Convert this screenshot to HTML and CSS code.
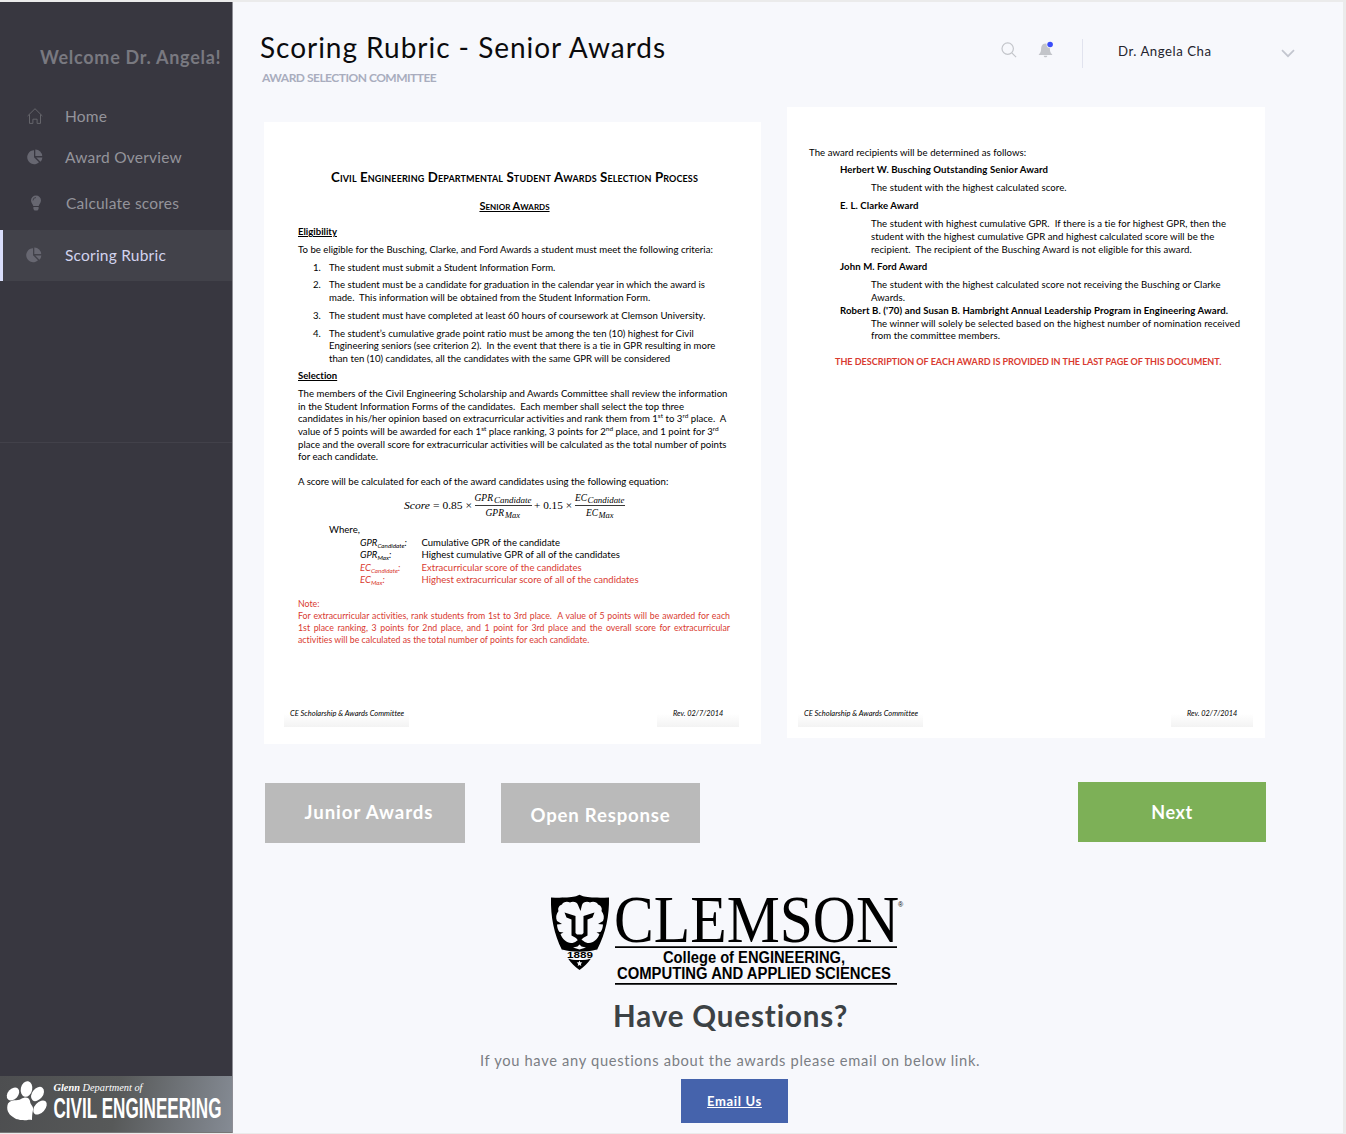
FILE: index.html
```html
<!DOCTYPE html>
<html lang="en">
<head>
<meta charset="utf-8">
<title>Scoring Rubric - Senior Awards</title>
<link rel="stylesheet" href="styles.css">
</head>
<body>
<div class="app">
  <aside class="sidebar">
    <div class="welcome">Welcome Dr. Angela!</div>
    <nav class="nav">
      <a class="nav-item home"><svg class="ico" viewBox="0 0 16 16"><path d="M.6 8 8 .7 15.400 8M2.500 6.500v8.900h3.400v-4.200h4.200v4.200h3.400V6.500" fill="none" stroke="#65656b" stroke-width="1"/></svg><span class="label">Home</span></a>
      <a class="nav-item overview"><svg class="ico" viewBox="0 0 16 16"><path d="M7 1.200v7.100l5 5A7 7 0 1 1 7 1.200Z"/><path d="M8.300.6a6.600 6.600 0 0 1 6.900 6.500H8.300Z"/><path d="M9.200 8.400h6.200a6.800 6.800 0 0 1-2 4.400Z"/></svg><span class="label">Award Overview</span></a>
      <a class="nav-item calc"><svg class="ico" viewBox="0 0 16 16"><path d="M8 .5a5 5 0 0 1 5 5c0 2.400-1.900 3.500-2.300 5.500H5.300C4.900 9 3 7.900 3 5.500a5 5 0 0 1 5-5ZM5.400 11.900h5.200v2L9.500 15.500h-3l-1.100-1.600Z"/><path d="M5 5.500a3 3 0 0 1 3-3" fill="none" stroke="#383740" stroke-width=".8"/></svg><span class="label">Calculate scores</span></a>
      <a class="nav-item active"><svg class="ico" viewBox="0 0 16 16"><path d="M7 1.200v7.100l5 5A7 7 0 1 1 7 1.200Z"/><path d="M8.300.6a6.600 6.600 0 0 1 6.900 6.500H8.300Z"/><path d="M9.200 8.400h6.200a6.800 6.800 0 0 1-2 4.400Z"/></svg><span class="label">Scoring Rubric</span></a>
    </nav>
    <div class="dept">
      <svg viewBox="0 0 231 57" width="231" height="57">
        <g fill="#fff">
          <ellipse cx="13" cy="18" rx="5.200" ry="7.300" transform="rotate(42 13 18)"/>
          <ellipse cx="26.500" cy="13" rx="5.700" ry="7.900" transform="rotate(12 26.500 13)"/>
          <ellipse cx="37.500" cy="18" rx="5.400" ry="8" transform="rotate(38 37.500 18)"/>
          <ellipse cx="40" cy="31.500" rx="5.200" ry="8.300" transform="rotate(42 40 31.500)"/>
          <path d="M8 27.500c4-5 9-2 13-4.500s8-2 9 2c0 4 4 5 3 9s-1 8-1 10c-4-1-5 1-9 0-4 0-6 0-10-3-5-3-7-8-5-13.500Z"/>
        </g>
        <text x="53.500" y="14.500" class="dept-small" textLength="89" lengthAdjust="spacingAndGlyphs"><tspan font-weight="700">Glenn</tspan> Department of</text>
        <text x="53.500" y="41.500" class="dept-big" textLength="168" lengthAdjust="spacingAndGlyphs">CIVIL ENGINEERING</text>
      </svg>
    </div>
  </aside>

  <main class="main">
    <header class="header">
      <div class="titles">
        <h1>Scoring Rubric - Senior Awards</h1>
        <div class="subtitle">AWARD SELECTION COMMITTEE</div>
      </div>
      <div class="tools">
        <svg class="search" viewBox="0 0 16 16"><circle cx="6.700" cy="6.600" r="5.700"/><path d="m10.800 10.800 4.300 4.300"/></svg>
        <svg class="bell" viewBox="0 0 16 18"><path d="M7.500 2.500c3.200.3 4.200 2.600 4.400 5.500.1 2.400.5 4 2.300 5.400v.6H.8v-.6C2.600 12 3 10.400 3.100 8c.2-2.900 1.200-5.200 4.400-5.500ZM5.700 14.700h3.600c-.3 2-3.300 2-3.600 0Z" fill="#c3c5ca"/><circle cx="12.100" cy="3.500" r="3.500" fill="#f7f8fc"/><circle cx="12.100" cy="3.500" r="2.800" fill="#3a4dfa"/></svg>
        <span class="divider"></span>
        <span class="user">Dr. Angela Cha</span>
        <svg class="chev" viewBox="0 0 14 9"><path d="m1 1.200 6 6 6-6"/></svg>
      </div>
    </header>

    <section class="docs">
      <article class="doc first">
        <h2>Civil Engineering Departmental Student Awards Selection Process</h2>
        <h3>Senior Awards</h3>
        <h4>Eligibility</h4>
        <p>To be eligible for the Busching, Clarke, and Ford Awards a student must meet the following criteria:</p>
        <ol>
          <li>The student must submit a Student Information Form.</li>
          <li>The student must be a candidate for graduation in the calendar year in which the award is<br>made.&nbsp; This information will be obtained from the Student Information Form.</li>
          <li>The student must have completed at least 60 hours of coursework at Clemson University.</li>
          <li>The student’s cumulative grade point ratio must be among the ten (10) highest for Civil<br>Engineering seniors (see criterion 2).&nbsp; In the event that there is a tie in GPR resulting in more<br>than ten (10) candidates, all the candidates with the same GPR will be considered</li>
        </ol>
        <h4>Selection</h4>
        <p class="body">The members of the Civil Engineering Scholarship and Awards Committee shall review the information<br>in the Student Information Forms of the candidates.&nbsp; Each member shall select the top three<br>candidates in his/her opinion based on extracurricular activities and rank them from 1<sup>st</sup> to 3<sup>rd</sup> place.&nbsp; A<br>value of 5 points will be awarded for each 1<sup>st</sup> place ranking, 3 points for 2<sup>nd</sup> place, and 1 point for 3<sup>rd</sup><br>place and the overall score for extracurricular activities will be calculated as the total number of points<br>for each candidate.</p>
        <p class="score">A score will be calculated for each of the award candidates using the following equation:</p>
        <svg class="equation" viewBox="0 0 224 32" width="224" height="32">
          <text x="1" y="16" textLength="26" lengthAdjust="spacingAndGlyphs" font-style="italic">Score</text>
          <text x="30" y="16" textLength="39" lengthAdjust="spacingAndGlyphs">= 0.85 ×</text>
          <text x="71.500" y="8" textLength="18.500" lengthAdjust="spacingAndGlyphs" font-style="italic">GPR</text>
          <text x="91" y="10" textLength="37.500" lengthAdjust="spacingAndGlyphs" class="sub">Candidate</text>
          <path d="M72 12.500h57M172 12.500h50" stroke="#222" stroke-width=".9"/>
          <text x="82.500" y="22.500" textLength="18.500" lengthAdjust="spacingAndGlyphs" font-style="italic">GPR</text>
          <text x="102" y="24.500" textLength="15" lengthAdjust="spacingAndGlyphs" class="sub">Max</text>
          <text x="131" y="16" textLength="38" lengthAdjust="spacingAndGlyphs">+ 0.15 ×</text>
          <text x="172" y="8" textLength="12" lengthAdjust="spacingAndGlyphs" font-style="italic">EC</text>
          <text x="184.500" y="10" textLength="37" lengthAdjust="spacingAndGlyphs" class="sub">Candidate</text>
          <text x="183" y="22.500" textLength="12" lengthAdjust="spacingAndGlyphs" font-style="italic">EC</text>
          <text x="195.500" y="24.500" textLength="15" lengthAdjust="spacingAndGlyphs" class="sub">Max</text>
        </svg>
        <div class="where">Where,</div>
        <dl>
          <dt>GPR<sub>Candidate</sub>:</dt><dd>Cumulative GPR of the candidate</dd>
          <dt>GPR<sub>Max</sub>:</dt><dd>Highest cumulative GPR of all of the candidates</dd>
          <dt class="red">EC<sub>Candidate</sub>:</dt><dd class="red">Extracurricular score of the candidates</dd>
          <dt class="red">EC<sub>Max</sub>:</dt><dd class="red">Highest extracurricular score of all of the candidates</dd>
        </dl>
        <div class="note red">
          <div>Note:</div>
          <div class="just">For extracurricular activities, rank students from 1st to 3rd place.&nbsp; A value of 5 points will be awarded for each</div>
          <div class="just">1st place ranking, 3 points for 2nd place, and 1 point for 3rd place and the overall score for extracurricular</div>
          <div>activities will be calculated as the total number of points for each candidate.</div>
        </div>
        <footer class="doc-foot"><span class="committee">CE Scholarship &amp; Awards Committee</span><span class="rev">Rev. 02/7/2014</span></footer>
      </article>

      <article class="doc second">
        <p>The award recipients will be determined as follows:</p>
        <h5>Herbert W. Busching Outstanding Senior Award</h5>
        <p class="in">The student with the highest calculated score.</p>
        <h5>E. L. Clarke Award</h5>
        <p class="in">The student with highest cumulative GPR.&nbsp; If there is a tie for highest GPR, then the<br>student with the highest cumulative GPR and highest calculated score will be the<br>recipient.&nbsp; The recipient of the Busching Award is not eligible for this award.</p>
        <h5>John M. Ford Award</h5>
        <p class="in tight">The student with the highest calculated score not receiving the Busching or Clarke<br>Awards.</p>
        <h5 class="tight hambright">Robert B. ('70) and Susan B. Hambright Annual Leadership Program in Engineering Award.</h5>
        <p class="in">The winner will solely be selected based on the highest number of nomination received<br>from the committee members.</p>
        <div class="desc red">THE DESCRIPTION OF EACH AWARD IS PROVIDED IN THE LAST PAGE OF THIS DOCUMENT.</div>
        <footer class="doc-foot"><span class="committee">CE Scholarship &amp; Awards Committee</span><span class="rev">Rev. 02/7/2014</span></footer>
      </article>
    </section>

    <section class="actions">
      <button class="btn junior">Junior Awards</button>
      <button class="btn open">Open Response</button>
      <button class="btn next">Next</button>
    </section>

    <section class="contact">
      <svg class="clemson" viewBox="550 893 356 94" width="356" height="94">
        <path d="M551 897.500c11 .5 21 0 25-1.200l3.500-1.600 3.500 1.600c4 1.200 14 1.700 26 1.200.4 18-3 35-12 52.500-11 4-24 4-35 0-8-16-11.500-33-11-52.500Z"/>
        <path d="M568 958.500c7 2 16 2 23 0-3 4.500-7 8.500-11.500 11.500-4.500-3-8.500-7-11.500-11.500Z"/>
        <g fill="#f7f8fc">
          <path d="M578 905c-1-3-5-4-8-2.500-3-1.500-7-.5-8 2-3 1-4.500 4-3.500 6.500-2.500 3-3 7-1.500 10l5 3-5 .500c.2 3 1 5.500 2.500 7.500l4 .5-3 1.500c1 3 2.500 5 4.500 6.500 3 3 8 3.500 11.500.5 1.500-1 2.500-1.500 3.500-1.500s2 .5 3.500 1.500c3.500 3 8.500 2.500 11.500-.5 2-1.500 3.500-3.500 4.500-6.500l-3-1.500 4-.5c1.500-2 2.300-4.500 2.500-7.500l-5-.5 5-3c1.500-3 1-7-1.500-10 1-2.500-.5-5.500-3.500-6.500-1-2.500-5-3.500-8-2-3-1.500-7-.5-8 2.500l-1.500 6Z"/>
          <path d="m573 947.500 4.500-1 2-2 2 2 4.500 1-6.500 2Z"/>
        </g>
        <path d="m564.500 912.500 11 3.500v17l1.500 1.500h5l1.500-1.500v-17l11-3.500-2 5-5 2v16l-4.500 2.500-2.500 3h-2l-2.500-3-4.500-2.500v-16l-5-2Z"/>
        <path fill="#f7f8fc" d="m579.500 960.500.8 1.800 2 .2-1.500 1.400.5 2-1.800-1-1.800 1 .5-2-1.500-1.400 2-.2Z"/>
        <path fill="#f7f8fc" d="M562 949.500c11 3 24 3 35 0l-2.500 8c-9 3-21 3-30 0Z"/>
        <text x="567" y="957.800" class="year" textLength="26" lengthAdjust="spacingAndGlyphs">1889</text>
        <text x="614" y="942" class="word" textLength="285" lengthAdjust="spacingAndGlyphs">CLEMSON</text>
        <text x="898" y="907" class="reg">®</text>
        <path d="M615 946.200h282v1.700H615ZM615 983h282v1.700H615Z"/>
        <text x="663" y="963" class="college" textLength="182" lengthAdjust="spacingAndGlyphs">College of ENGINEERING,</text>
        <text x="617" y="978.500" class="college" textLength="274" lengthAdjust="spacingAndGlyphs">COMPUTING AND APPLIED SCIENCES</text>
      </svg>
      <h2 class="questions">Have Questions?</h2>
      <p class="ask">If you have any questions about the awards please email on below link.</p>
      <a class="email">Email Us</a>
    </section>
  </main>
</div>
</body>
</html>
```
FILE: styles.css
```css
* { box-sizing: border-box; margin: 0; padding: 0; }
body { width: 1346px; height: 1134px; overflow: hidden; font-family: Lato, "Open Sans", sans-serif; background: #ebebeb; }
.app { display: flex; width: 1343px; height: 1131px; margin-top: 2px; background: #f7f8fc; }
svg { overflow: visible; flex: none; }

.sidebar { display: flex; flex-direction: column; width: 233px; flex: none; background: #383740; border-right: 1px solid #8e8e95; }
.welcome { padding: 42px 0 0 40px; height: 93px; font-size: 18px; line-height: 26px; font-weight: 700; letter-spacing: .72px; color: #797980; white-space: nowrap; }
.nav { display: flex; flex-direction: column; height: 348px; border-bottom: 1px solid #42414a; }
.nav-item { display: flex; align-items: center; gap: 22px; height: 41px; padding-left: 27px; font-size: 15.500px; letter-spacing: .22px; color: #94949b; }
.ico { width: 16px; height: 16px; fill: #676771; flex: none; }
.calc { height: 52px; padding-bottom: 3px; padding-left: 28px; }
.overview { height: 42px; }
.active { height: 51px; padding: 0 0 1px 23px; border-left: 3px solid #d9defb; background: #42424a; color: #d2d3ee; gap: 23px; }
.dept { margin-top: auto; height: 57px; border-bottom: 1px solid #777; background: linear-gradient(100deg, #4d4e50, #575959 50%, #858b94); }
.dept svg { display: block; }
.dept-small { font: italic 10.500px "Liberation Serif", serif; fill: #fff; }
.dept-big { font: 700 29px "Liberation Sans", sans-serif; fill: #fff; }

.main { flex: 1; display: flex; flex-direction: column; }
.header { display: flex; height: 105px; padding-left: 27px; }
.titles { width: 740px; padding-top: 26px; }
h1 { font-size: 28px; line-height: 38px; font-weight: 400; letter-spacing: .97px; color: #0b0b0d; white-space: nowrap; }
.subtitle { padding-left: 2px; margin-top: 3px; font-size: 12px; line-height: 18px; font-weight: 700; letter-spacing: -.5px; color: #a9adbe; white-space: nowrap; }
.tools { display: flex; align-items: center; height: 62px; margin-top: 17px; }
.search { width: 16px; height: 16px; margin: 0 21px 0 1px; fill: none; stroke: #c3c5ca; stroke-width: 1.200; }
.bell { width: 16px; height: 18px; }
.divider { width: 1px; height: 29px; margin: 6px 35px 0 28px; background: #e1e3ee; }
.user { width: 163px; padding-top: 1px; font-size: 13.200px; letter-spacing: .54px; color: #24242e; }
.chev { width: 14px; height: 9px; margin-top: 7px; fill: none; stroke: #c3c6cf; stroke-width: 1.700; }

.docs { display: flex; align-items: flex-start; gap: 26px; height: 637px; padding-left: 31px; }
.doc { display: flex; flex-direction: column; background: #fff; font-size: 9.600px; letter-spacing: .015px; line-height: 12.600px; color: #000; white-space: nowrap; font-variant-ligatures: none; }
.red { color: #d93a30; }
.first { width: 497px; height: 622px; margin-top: 15px; padding: 48px 30px 0 34px; }
.first h2 { font-size: 13.300px; line-height: 15px; letter-spacing: .12px; text-align: center; font-variant-caps: small-caps; }
.first h3 { margin-top: 14px; font-size: 11px; line-height: 14px; text-align: center; font-variant-caps: small-caps; text-decoration: underline; }
.first h4 { margin: 13px 0 5.200px; font-size: 9.500px; line-height: 12.600px; text-decoration: underline; }
.first ol { list-style: none; counter-reset: item; margin-top: 5.200px; }
.first li { position: relative; padding-left: 31px; margin-bottom: 5.200px; counter-increment: item; }
.first li::before { content: counter(item) "."; position: absolute; left: 15px; }
.first ol + h4 { margin-top: 0; }
sup, sub { font-size: 6.500px; line-height: 0; }
sub { font-size: 6.300px; vertical-align: -2px; }
.score { margin-top: 12.600px; }
.equation { margin: 4px 0 0 105px; font: 10.300px "Liberation Serif", serif; letter-spacing: 0; }
.sub { font-size: 7.800px; font-style: italic; }
.where { margin: -1px 0 0 31px; }
dl { display: grid; grid-template-columns: 61.500px 1fr; padding-left: 62px; font-size: 9.500px; }
dt { font-style: italic; }
.note { margin-top: 11.500px; width: 432px; line-height: 11.700px; font-size: 8.780px; }
.just { text-align: justify; text-align-last: justify; white-space: normal; }
.doc-foot { display: flex; justify-content: space-between; margin-top: auto; font-size: 7.500px; font-style: italic; line-height: 9px; }
.doc-foot span { height: 19px; padding: 1px 5px 0; background: linear-gradient(#fff 30%, #f3f3f3); }
.first .doc-foot { margin: auto -8px 17px -14px; }
.doc-foot .committee { width: 125px; padding-left: 6px; }
.doc-foot .rev { width: 82px; padding-left: 16px; font-size: 7.350px; }
.second { width: 478px; height: 631px; padding: 39.500px 12px 11px 22px; line-height: 12.720px; letter-spacing: .06px; }
.second p { margin-bottom: 5.200px; }
.second h5 { font-size: 9.600px; letter-spacing: .1px; margin: 0 0 5.200px 31px; }
.second .in { margin-left: 62px; }
.second .tight { margin-bottom: 0; }
.desc { margin: 8px 0 0 26px; font-size: 9.050px; font-weight: 700; letter-spacing: -.015px; }
.second .doc-foot { margin-left: -11px; letter-spacing: .015px; }

.actions { display: flex; align-items: flex-start; height: 99px; margin-top: 38px; padding-left: 32px; }
.btn { border: 0; height: 60px; background: #bababa; color: #fff; font: 700 18px Lato, sans-serif; letter-spacing: .6px; }
.junior { width: 200px; margin-top: 1px; padding: 0 0 2px 8px; font-size: 18.600px; letter-spacing: .95px; }
.open { width: 199px; margin: 1px 378px 0 36px; padding-top: 4px; font-size: 18.600px; letter-spacing: .8px; }
.next { width: 188px; }
.btn.next { background: #7db057; }

.contact { display: flex; flex-direction: column; align-items: flex-start; padding-top: 12px; }
.clemson { margin-left: 317px; }
.year { font: 700 8.500px "Liberation Sans", sans-serif; }
.word { font: 67px "Liberation Serif", serif; }
.reg { font: 7px "Liberation Sans", sans-serif; }
.college { font: 700 16px "Liberation Sans", sans-serif; }
.questions { margin: 10px 0 0 380px; font-size: 29.500px; line-height: 38px; letter-spacing: .87px; color: #3c4245; }
.ask { margin: 15px 0 0 247px; font-size: 14.700px; line-height: 20px; letter-spacing: .67px; color: #7b7e84; }
.email { display: flex; align-items: center; justify-content: center; width: 107px; height: 44px; margin: 9px 0 0 448px; background: #4563ac; color: #fff; font-size: 13px; font-weight: 700; letter-spacing: .65px; text-decoration: underline; }
```
